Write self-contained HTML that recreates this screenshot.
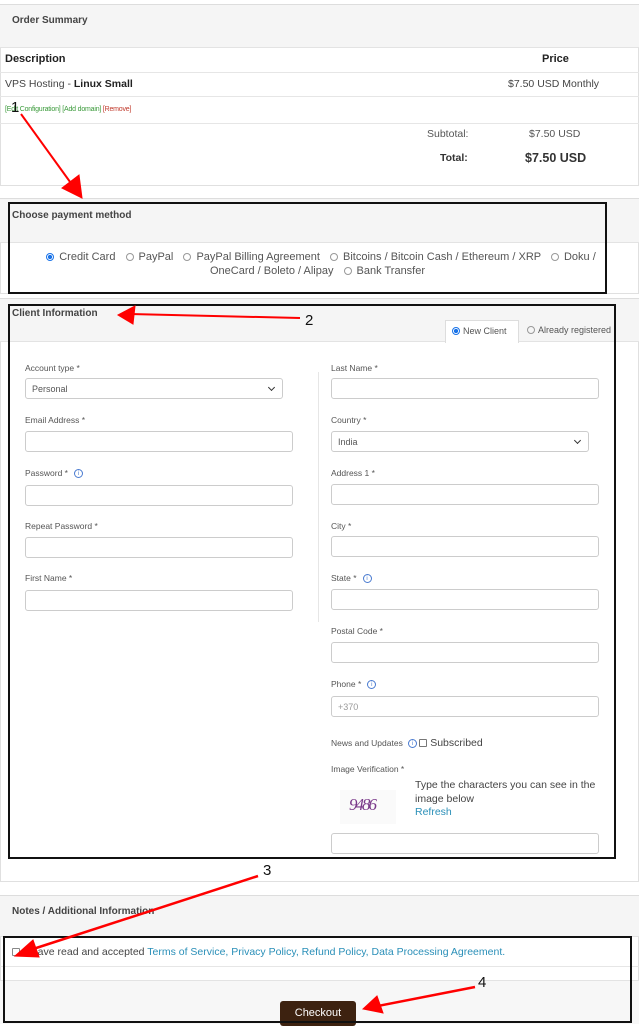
<!DOCTYPE html>
<html><head><meta charset="utf-8"><style>
*{box-sizing:border-box;margin:0;padding:0}
body{width:639px;height:1024px;overflow:hidden;background:#fff;font-family:"Liberation Sans",Arial,sans-serif;position:relative;color:#333}
.a{position:absolute}
.hd{position:absolute;left:0;width:639px;background:#f5f5f5;border-top:1px solid #ddd;border-bottom:1px solid #e3e3e3}
.t{font-size:10px;font-weight:bold;color:#444}
.lbl{position:absolute;font-size:8.5px;color:#555}
.in{position:absolute;height:21px;border:1px solid #ccc;border-radius:3px;background:#fff}
.sel{font-size:9px;color:#555;padding:5px 6px}
.sel:after{content:"";position:absolute;right:8px;top:6px;width:4px;height:4px;border-right:1.5px solid #333;border-bottom:1.5px solid #333;transform:rotate(45deg)}
.line{position:absolute;left:0;width:639px;height:1px;background:#e6e6e6}
.rad{display:inline-block;width:8px;height:8px;border:1px solid #999;border-radius:50%;vertical-align:-1px;margin:0 5px 0 7px}
.rad.on{border-color:#1a73e8;background:radial-gradient(#1a73e8 45%,#fff 55%)}
.info{display:inline-block;width:9px;height:9px;border:1px solid #4a7bd0;border-radius:50%;font-size:6px;color:#4a7bd0;text-align:center;line-height:8px;vertical-align:1px;margin-left:6px}
.lnk{color:#2a8fb8}
</style></head><body>
<div class="a" style="left:0;top:4px;width:639px;height:182px;border:1px solid #e0e0e0"></div>
<div class="hd" style="top:4px;height:44px"></div>
<div class="a t" style="left:12px;top:15px">Order Summary</div>
<div class="a" style="left:5px;top:53px;font-size:11px;font-weight:bold;color:#222">Description</div>
<div class="a" style="left:542px;top:53px;font-size:11px;font-weight:bold;color:#222">Price</div>
<div class="line" style="top:72px"></div>
<div class="a" style="left:5px;top:78px;font-size:10.5px;color:#444">VPS Hosting - <b style="color:#222">Linux Small</b></div>
<div class="a" style="left:508px;top:78px;font-size:10.5px;color:#444">$7.50 USD Monthly</div>
<div class="line" style="top:96px"></div>
<div class="a" style="left:5px;top:106px;font-size:7px;color:#3a9a3a;letter-spacing:-0.2px">[Edit Configuration] [Add domain] <span style="color:#c0392b">[Remove]</span></div>
<div class="line" style="top:123px"></div>
<div class="a" style="left:427px;top:128px;font-size:10.5px;color:#555">Subtotal:</div>
<div class="a" style="left:529px;top:128px;font-size:10.5px;color:#555">$7.50 USD</div>
<div class="a" style="left:440px;top:152px;font-size:10.5px;font-weight:bold;color:#333">Total:</div>
<div class="a" style="left:525px;top:151px;font-size:12.5px;font-weight:bold;color:#333">$7.50 USD</div>

<div class="a" style="left:0;top:198px;width:639px;height:96px;border:1px solid #e0e0e0"></div>
<div class="hd" style="top:198px;height:45px"></div>
<div class="a t" style="left:12px;top:210px">Choose payment method</div>
<div class="a" style="left:0;top:250px;width:639px;text-align:center;font-size:11px;line-height:14px;color:#555;white-space:nowrap;padding-right:4px"><span class="rad on"></span>Credit Card <span class="rad"></span>PayPal <span class="rad"></span>PayPal Billing Agreement <span class="rad"></span>Bitcoins / Bitcoin Cash / Ethereum / XRP <span class="rad"></span>Doku /<br>OneCard / Boleto / Alipay <span class="rad"></span>Bank Transfer</div>

<div class="a" style="left:0;top:298px;width:639px;height:584px;border:1px solid #e0e0e0"></div>
<div class="hd" style="top:298px;height:44px"></div>
<div class="a t" style="left:12px;top:308px">Client Information</div>
<div class="a" style="left:445px;top:320px;width:74px;height:23px;background:#fff;border:1px solid #ddd;border-bottom:none;font-size:9px;color:#555;padding-top:5px"><span class="rad on" style="margin-left:6px;margin-right:3px"></span>New Client</div>
<div class="a" style="left:520px;top:325px;font-size:9px;color:#555"><span class="rad" style="margin-right:3px"></span>Already registered</div>
<div class="a" style="left:318px;top:372px;width:1px;height:250px;background:#e6e6e6"></div>

<div class="lbl" style="left:25px;top:363px">Account type *</div>
<div class="in sel" style="left:25px;top:378px;width:258px">Personal</div>
<div class="lbl" style="left:25px;top:415px">Email Address *</div>
<div class="in" style="left:25px;top:431px;width:268px"></div>
<div class="lbl" style="left:25px;top:468px">Password *<span class="info">i</span></div>
<div class="in" style="left:25px;top:485px;width:268px"></div>
<div class="lbl" style="left:25px;top:521px">Repeat Password *</div>
<div class="in" style="left:25px;top:537px;width:268px"></div>
<div class="lbl" style="left:25px;top:573px">First Name *</div>
<div class="in" style="left:25px;top:590px;width:268px"></div>

<div class="lbl" style="left:331px;top:363px">Last Name *</div>
<div class="in" style="left:331px;top:378px;width:268px"></div>
<div class="lbl" style="left:331px;top:415px">Country *</div>
<div class="in sel" style="left:331px;top:431px;width:258px">India</div>
<div class="lbl" style="left:331px;top:468px">Address 1 *</div>
<div class="in" style="left:331px;top:484px;width:268px"></div>
<div class="lbl" style="left:331px;top:521px">City *</div>
<div class="in" style="left:331px;top:536px;width:268px"></div>
<div class="lbl" style="left:331px;top:573px">State *<span class="info">i</span></div>
<div class="in" style="left:331px;top:589px;width:268px"></div>
<div class="lbl" style="left:331px;top:626px">Postal Code *</div>
<div class="in" style="left:331px;top:642px;width:268px"></div>
<div class="lbl" style="left:331px;top:679px">Phone *<span class="info">i</span></div>
<div class="in" style="left:331px;top:696px;width:268px;font-size:9px;color:#999;padding:5px 6px">+370</div>
<div class="lbl" style="left:331px;top:737px">News and Updates <span class="info" style="margin-left:3px">i</span><span style="display:inline-block;width:8px;height:8px;border:1px solid #777;border-radius:1px;margin:0 3px 0 2px;vertical-align:-1px"></span><span style="font-size:10.5px;color:#444">Subscribed</span></div>
<div class="lbl" style="left:331px;top:764px">Image Verification *</div>
<div class="a" style="left:340px;top:790px;width:56px;height:34px;background:#fafafa;font-family:'Liberation Serif',serif;font-size:17px;color:#7a3a8a;letter-spacing:-2px;padding:5px 0 0 9px;font-style:italic">9486</div>
<div class="a" style="left:415px;top:779px;font-size:10.5px;line-height:13.5px;color:#444;width:190px">Type the characters you can see in the image below<br><span class="lnk">Refresh</span></div>
<div class="in" style="left:331px;top:833px;width:268px"></div>

<div class="a" style="left:0;top:895px;width:639px;height:129px;border:1px solid #e0e0e0"></div>
<div class="hd" style="top:895px;height:42px"></div>
<div class="a t" style="left:12px;top:906px">Notes / Additional Information</div>
<div class="a" style="left:12px;top:946px;font-size:10.5px;color:#444"><span style="display:inline-block;width:8px;height:8px;border:1px solid #888;border-radius:1px;margin-right:6px;vertical-align:-1px"></span>I have read and accepted <span class="lnk">Terms of Service, Privacy Policy, Refund Policy, Data Processing Agreement.</span></div>
<div class="line" style="top:966px"></div>
<div class="a" style="left:0;top:980px;width:639px;height:44px;background:#f7f7f7;border-top:1px solid #e3e3e3"></div>
<div class="a" style="left:280px;top:1001px;width:76px;height:25px;background:#3d2210;border-radius:3px;color:#fff;font-size:11px;text-align:center;padding-top:6px">Checkout</div>

<svg class="a" style="left:0;top:0" width="639" height="1024">
<g fill="none" stroke="#111" stroke-width="2">
<rect x="9" y="203" width="597" height="90"/>
<rect x="9" y="305" width="606" height="553"/>
<rect x="4" y="937" width="627" height="85"/>
</g>
<g fill="#f00" stroke="#f00">
<line x1="21" y1="114" x2="73" y2="186" stroke-width="2"/>
<polygon points="62,188 82,198 79,175"/>
<line x1="300" y1="318" x2="130" y2="314" stroke-width="2"/>
<polygon points="118,315 135,306 133,324"/>
<line x1="258" y1="876" x2="30" y2="950" stroke-width="2.5"/>
<polygon points="15,956 33,940 39,957"/>
<line x1="475" y1="987" x2="378" y2="1006" stroke-width="2.5"/>
<polygon points="363,1009 377,996 383,1013"/>
</g>
<g font-family="Liberation Sans,sans-serif" font-size="15" fill="#111">
<text x="11" y="112">1</text><text x="305" y="325">2</text><text x="263" y="875">3</text><text x="478" y="987">4</text>
</g>
</svg>
</body></html>
